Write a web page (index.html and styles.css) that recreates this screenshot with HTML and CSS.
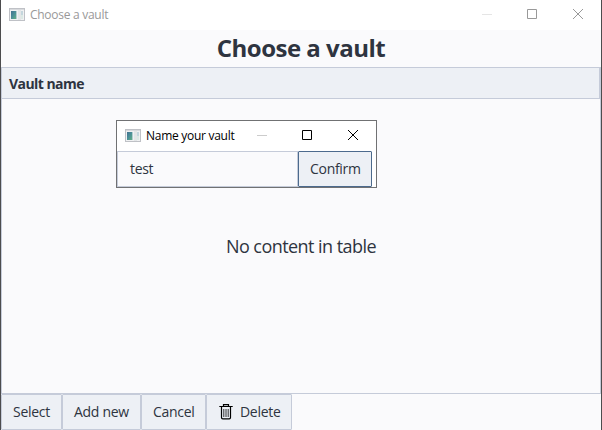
FILE: index.html
```html
<!DOCTYPE html>
<html lang="en">
<head>
<meta charset="utf-8">
<title>Choose a vault</title>
<link rel="stylesheet" href="styles.css">
</head>
<body>
<svg width="0" height="0" class="defs" aria-hidden="true">
  <defs>
    <linearGradient id="pane" x1="0" y1="0" x2="1" y2="1">
      <stop offset="0" stop-color="#42718f"/>
      <stop offset=".5" stop-color="#4b8f98"/>
      <stop offset="1" stop-color="#64b183"/>
    </linearGradient>
    <symbol id="app" viewBox="0 0 16 14">
      <rect x=".5" y=".5" width="15" height="12" fill="#f0f1f2" stroke="#bfc1c6"/>
      <rect x="1" y="1" width="14" height="1" fill="#d8dadd"/>
      <rect x="2" y="3" width="5" height="8" fill="url(#pane)"/>
      <rect x="7" y="3" width="1" height="8" fill="#b3cdd0"/>
      <rect x="9" y="2" width="3" height="10" fill="#e3e6e7"/>
      <rect x="12" y="3" width="2" height="4" fill="#c4d6dd"/>
      <rect x="12" y="7" width="2" height="4" fill="#dce9e4"/>
    </symbol>
  </defs>
</svg>
<div class="window">
  <header class="titlebar">
    <svg class="app-icon" width="16" height="14"><use href="#app"/></svg>
    <span class="caption">Choose a vault</span>
    <div class="controls">
      <svg width="46" height="30"><path d="M17 14.5h10"/></svg>
      <svg width="46" height="30"><path d="M16.5 9.5h9v9h-9z"/></svg>
      <svg width="46" height="30"><path d="M16 9l10 10M26 9l-10 10"/></svg>
    </div>
  </header>
  <h1><span>Choose a vault</span></h1>
  <main class="table">
    <div class="table-head"><span>Vault name</span></div>
    <div class="table-body"><span>No content in table</span></div>
  </main>
  <footer class="actions">
    <button class="select"><span>Select</span></button>
    <button class="add"><span>Add new</span></button>
    <button class="cancel"><span>Cancel</span></button>
    <button class="delete">
      <svg width="14" height="16" viewBox="0 0 14 16" fill="none" stroke="#000">
        <path d="M.3 2.5h13.4M4.5 2V.7h5V2" stroke-width="1.2"/>
        <path d="M2.5 3v10.5q0 1.3 1.3 1.3h6.4q1.3 0 1.3-1.3V3" stroke-width="1.2"/>
        <path d="M4.8 5v8M7 5v8M9.2 5v8" stroke-width=".8"/>
      </svg>
      <span>Delete</span>
    </button>
  </footer>
</div>
<section class="dialog">
  <header class="titlebar">
    <svg class="app-icon" width="16" height="14"><use href="#app"/></svg>
    <span class="caption">Name your vault</span>
    <div class="controls">
      <svg width="46" height="30"><path d="M17 14.5h10"/></svg>
      <svg width="46" height="30"><path d="M16.5 9.5h9v9h-9z"/></svg>
      <svg width="46" height="30"><path d="M16 9l10 10M26 9l-10 10"/></svg>
    </div>
  </header>
  <div class="form">
    <div class="field"><span>test</span></div>
    <button class="confirm"><span>Confirm</span></button>
  </div>
</section>
</body>
</html>
```
FILE: styles.css
```css
* { box-sizing: border-box; }
body {
  margin: 0;
  font: 14px/20px "Open Sans", "Noto Sans", sans-serif;
  font-weight: 370;
  color: #2e3440;
  overflow: hidden;
}
.defs { position: absolute; }
svg { display: block; flex: none; }
span { white-space: nowrap; }
.window {
  width: 602px;
  height: 430px;
  display: flex;
  flex-direction: column;
  background: #fafafc;
  border: solid #4c4c4e;
  border-width: 0 1px;
}
.titlebar {
  display: flex;
  align-items: center;
  height: 30px;
  padding-left: 8px;
  background: #fff;
  font-size: 12px;
  color: #999;
}
.caption { margin-left: 5px; letter-spacing: -.28px; }
.controls { display: flex; margin: 0 -2px 0 auto; }
.controls path { fill: none; stroke: #999; }
.controls svg:first-child path { stroke: #e5e5e5; }
h1 {
  margin: 0;
  height: 37px;
  font-size: 24px;
  line-height: 36px;
  text-align: center;
  letter-spacing: -.5px;
}
.table {
  height: 327px;
  border: 1px solid #c5cbd9;
  display: flex;
  flex-direction: column;
}
.table-head {
  height: 31px;
  padding-left: 7px;
  line-height: 32px;
  background: #edf0f5;
  border: solid #c5cbd9;
  border-width: 0 1px 1px 0;
  font-weight: 700;
  letter-spacing: -.55px;
}
.table-body {
  flex: 1;
  display: flex;
  align-items: center;
  justify-content: center;
  font-size: 18px;
  letter-spacing: -.55px;
}
.actions { display: flex; height: 36px; }
button {
  display: flex;
  align-items: center;
  height: 36px;
  padding: 0 0 0 11px;
  border: 1px solid #c5cbd9;
  border-radius: 1px;
  background: #edf0f5;
  color: inherit;
  font: inherit;
  letter-spacing: -.3px;
}
.select { width: 61px; }
.add { width: 79px; }
.cancel { width: 65px; }
.delete { width: 86px; padding-left: 12px; gap: 7px; }
.dialog {
  position: absolute;
  left: 116px;
  top: 120px;
  width: 261px;
  height: 68px;
  background: #fff;
  border: 1px solid #707173;
}
.dialog .titlebar { color: #000; }
.dialog .controls path { stroke: #000; }
.dialog .controls svg:first-child path { stroke: #ccc; }
.form { display: flex; width: 255px; }
.field {
  width: 181px;
  height: 36px;
  padding-left: 12px;
  line-height: 34px;
  letter-spacing: -.3px;
  background: #fafafc;
  border: 1px solid #c5cbd9;
}
.confirm { width: 74px; border-color: #4c6a8d; }
```
